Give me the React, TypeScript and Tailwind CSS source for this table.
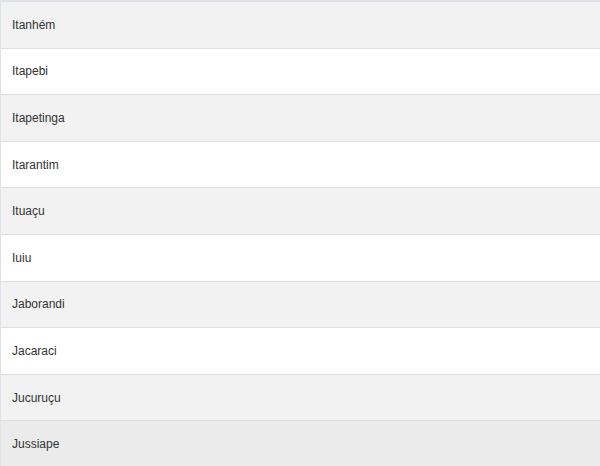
import React from "react";

const rows = [
  "Itanhém",
  "Itapebi",
  "Itapetinga",
  "Itarantim",
  "Ituaçu",
  "Iuiu",
  "Jaborandi",
  "Jacaraci",
  "Jucuruçu",
  "Jussiape",
];

export default function App() {
  return (
    <div
      className="w-[600px] h-[466px] overflow-hidden bg-white border-t-2 border-l border-[#dde3e8]"
      style={{ fontFamily: '"Liberation Sans", Arial, sans-serif' }}
    >
      {rows.map((r, i) => (
        <div
          key={r}
          className={`h-[46.6px] flex items-center pl-[11px] text-[12px] text-[#333333] border-b border-[#dfdfdf] ${
            i === 9 ? "bg-[#ebebeb]" : i % 2 === 0 ? "bg-[#f2f2f2]" : "bg-white"
          }`}
        >
          {r}
        </div>
      ))}
    </div>
  );
}
